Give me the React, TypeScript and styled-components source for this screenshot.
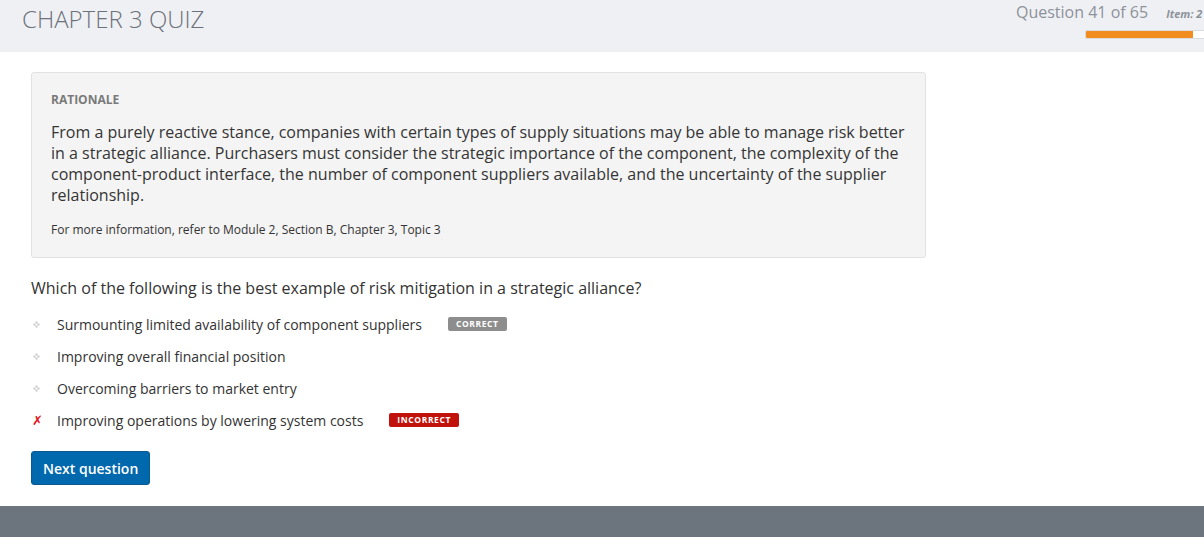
import * as React from "react";
import styled, {createGlobalStyle} from "styled-components";

const GlobalStyle = createGlobalStyle`
  html, body {
    margin: 0;
    padding: 0;
    background: #ffffff;
    font-family: "Open Sans", "Liberation Sans", sans-serif;
  }
`;

const Page = styled.div`
  display: flex;
  flex-direction: column;
  min-height: 537px;
  overflow: hidden;
`;

const Header = styled.header`
  height: 52px;
  background: #eff0f4;
  display: flex;
  justify-content: space-between;
  padding-left: 22px;
  overflow: hidden;
`;

const Title = styled.h1`
  margin: 3px 0 0;
  font-size: 24px;
  font-weight: 300;
  color: #6c717a;
  line-height: 32px;
`;

const Status = styled.div`
  width: 188px;
  flex-shrink: 0;
  display: flex;
  flex-direction: column;
  align-items: flex-end;
  padding-top: 1px;
  white-space: nowrap;
`;

const StatusLine = styled.div`
  align-self: flex-start;
  display: flex;
  align-items: baseline;
  gap: 18px;
`;

const Counter = styled.span`
  font-size: 16px;
  color: #8d929a;
  line-height: 22px;
`;

const ItemTag = styled.span`
  font-size: 11px;
  font-weight: 700;
  font-style: italic;
  color: #8d929a;
`;

const Progress = styled.div`
  margin-top: 7px;
  width: 119px;
  height: 9px;
  background: #ffffff;
  border: 1px solid #d9dbe0;
  border-right: none;
  border-radius: 2px 0 0 2px;
  box-sizing: border-box;
  overflow: hidden;
`;

const ProgressFill = styled.div`
  height: 100%;
  background: #f28c1f;
`;

const Main = styled.main`
  flex: 1;
  padding: 20px 31px 20px;
`;

const Rationale = styled.section`
  width: 895px;
  box-sizing: border-box;
  background: #f4f4f4;
  border: 1px solid #e2e2e2;
  border-radius: 3px;
  padding: 18px 19px 18px;
`;

const Label = styled.div`
  font-size: 12px;
  font-weight: 700;
  color: #7a7a7a;
  line-height: 18px;
`;

const Body = styled.p`
  margin: 13px 0 0;
  font-size: 16px;
  line-height: 21px;
  color: #353535;
`;

const Reference = styled.p`
  margin: 15px 0 0;
  font-size: 12px;
  line-height: 18px;
  color: #333333;
`;

const Question = styled.p`
  margin: 18px 0 0;
  font-size: 16px;
  line-height: 24px;
  color: #333333;
`;

const Options = styled.ul`
  list-style: none;
  margin: 14px 0 0;
  padding: 0;
  display: flex;
  flex-direction: column;
  gap: 12px;
`;

const Option = styled.li`
  display: flex;
  align-items: center;
  height: 20px;
  font-size: 14px;
  color: #333333;
`;

const Marker = styled.span`
  width: 26px;
  display: flex;
  align-items: center;
`;

const CrossGlyph = styled.span`
  font-family: "DejaVu Sans", sans-serif;
  font-size: 13px;
  font-weight: 700;
  color: #e3141b;
  margin-left: 1px;
  line-height: 1;
`;

const Badge = styled.span<{$tone: "correct" | "incorrect"}>`
  margin-left: 26px;
  padding: 0 8px;
  height: 14px;
  line-height: 14px;
  font-size: 8.5px;
  font-weight: 700;
  letter-spacing: 0.6px;
  color: #ffffff;
  border-radius: 2px;
  background: ${p => (p.$tone === "correct" ? "#8d8d8d" : "#c1120c")};
`;

const Button = styled.button`
  margin-top: 21px;
  height: 34px;
  padding: 0 11px;
  background: #0068ad;
  border: 1px solid #0b5890;
  border-radius: 3px;
  color: #ffffff;
  font-family: "Open Sans", "Liberation Sans", sans-serif;
  font-size: 14px;
  font-weight: 600;
`;

const Footer = styled.footer`
  height: 31px;
  background: #6c757d;
`;

const Diamond = () => (
  <svg width="7" height="7" viewBox="0 0 7 7" style={{marginLeft: 2}}>
    <rect x="2.5" y="0.5" width="2" height="2" fill="#c8c8c8" />
    <rect x="0.5" y="2.5" width="2" height="2" fill="#c8c8c8" />
    <rect x="4.5" y="2.5" width="2" height="2" fill="#c8c8c8" />
    <rect x="2.5" y="4.5" width="2" height="2" fill="#c8c8c8" />
  </svg>
);

const options = [
  {text: "Surmounting limited availability of component suppliers", badge: "correct" as const},
  {text: "Improving overall financial position"},
  {text: "Overcoming barriers to market entry"},
  {text: "Improving operations by lowering system costs", badge: "incorrect" as const, chosen: true},
];

const App = () => (
  <Page>
    <GlobalStyle />
    <Header>
      <Title>CHAPTER 3 QUIZ</Title>
      <Status>
        <StatusLine>
          <Counter>Question 41 of 65</Counter>
          <ItemTag>Item: 2</ItemTag>
        </StatusLine>
        <Progress>
          <ProgressFill style={{width: `${(41 / 65) * 170}px`}} />
        </Progress>
      </Status>
    </Header>
    <Main>
      <Rationale>
        <Label>RATIONALE</Label>
        <Body>
          From a purely reactive stance, companies with certain types of supply situations may be able to manage risk better
          in a strategic alliance. Purchasers must consider the strategic importance of the component, the complexity of the
          component-product interface, the number of component suppliers available, and the uncertainty of the supplier
          relationship.
        </Body>
        <Reference>For more information, refer to Module 2, Section B, Chapter 3, Topic 3</Reference>
      </Rationale>
      <Question>Which of the following is the best example of risk mitigation in a strategic alliance?</Question>
      <Options>
        {options.map(o => (
          <Option key={o.text}>
            <Marker>{o.chosen ? <CrossGlyph>✗</CrossGlyph> : <Diamond />}</Marker>
            {o.text}
            {o.badge && <Badge $tone={o.badge}>{o.badge === "correct" ? "CORRECT" : "INCORRECT"}</Badge>}
          </Option>
        ))}
      </Options>
      <Button>Next question</Button>
    </Main>
    <Footer />
  </Page>
);

export default App;
